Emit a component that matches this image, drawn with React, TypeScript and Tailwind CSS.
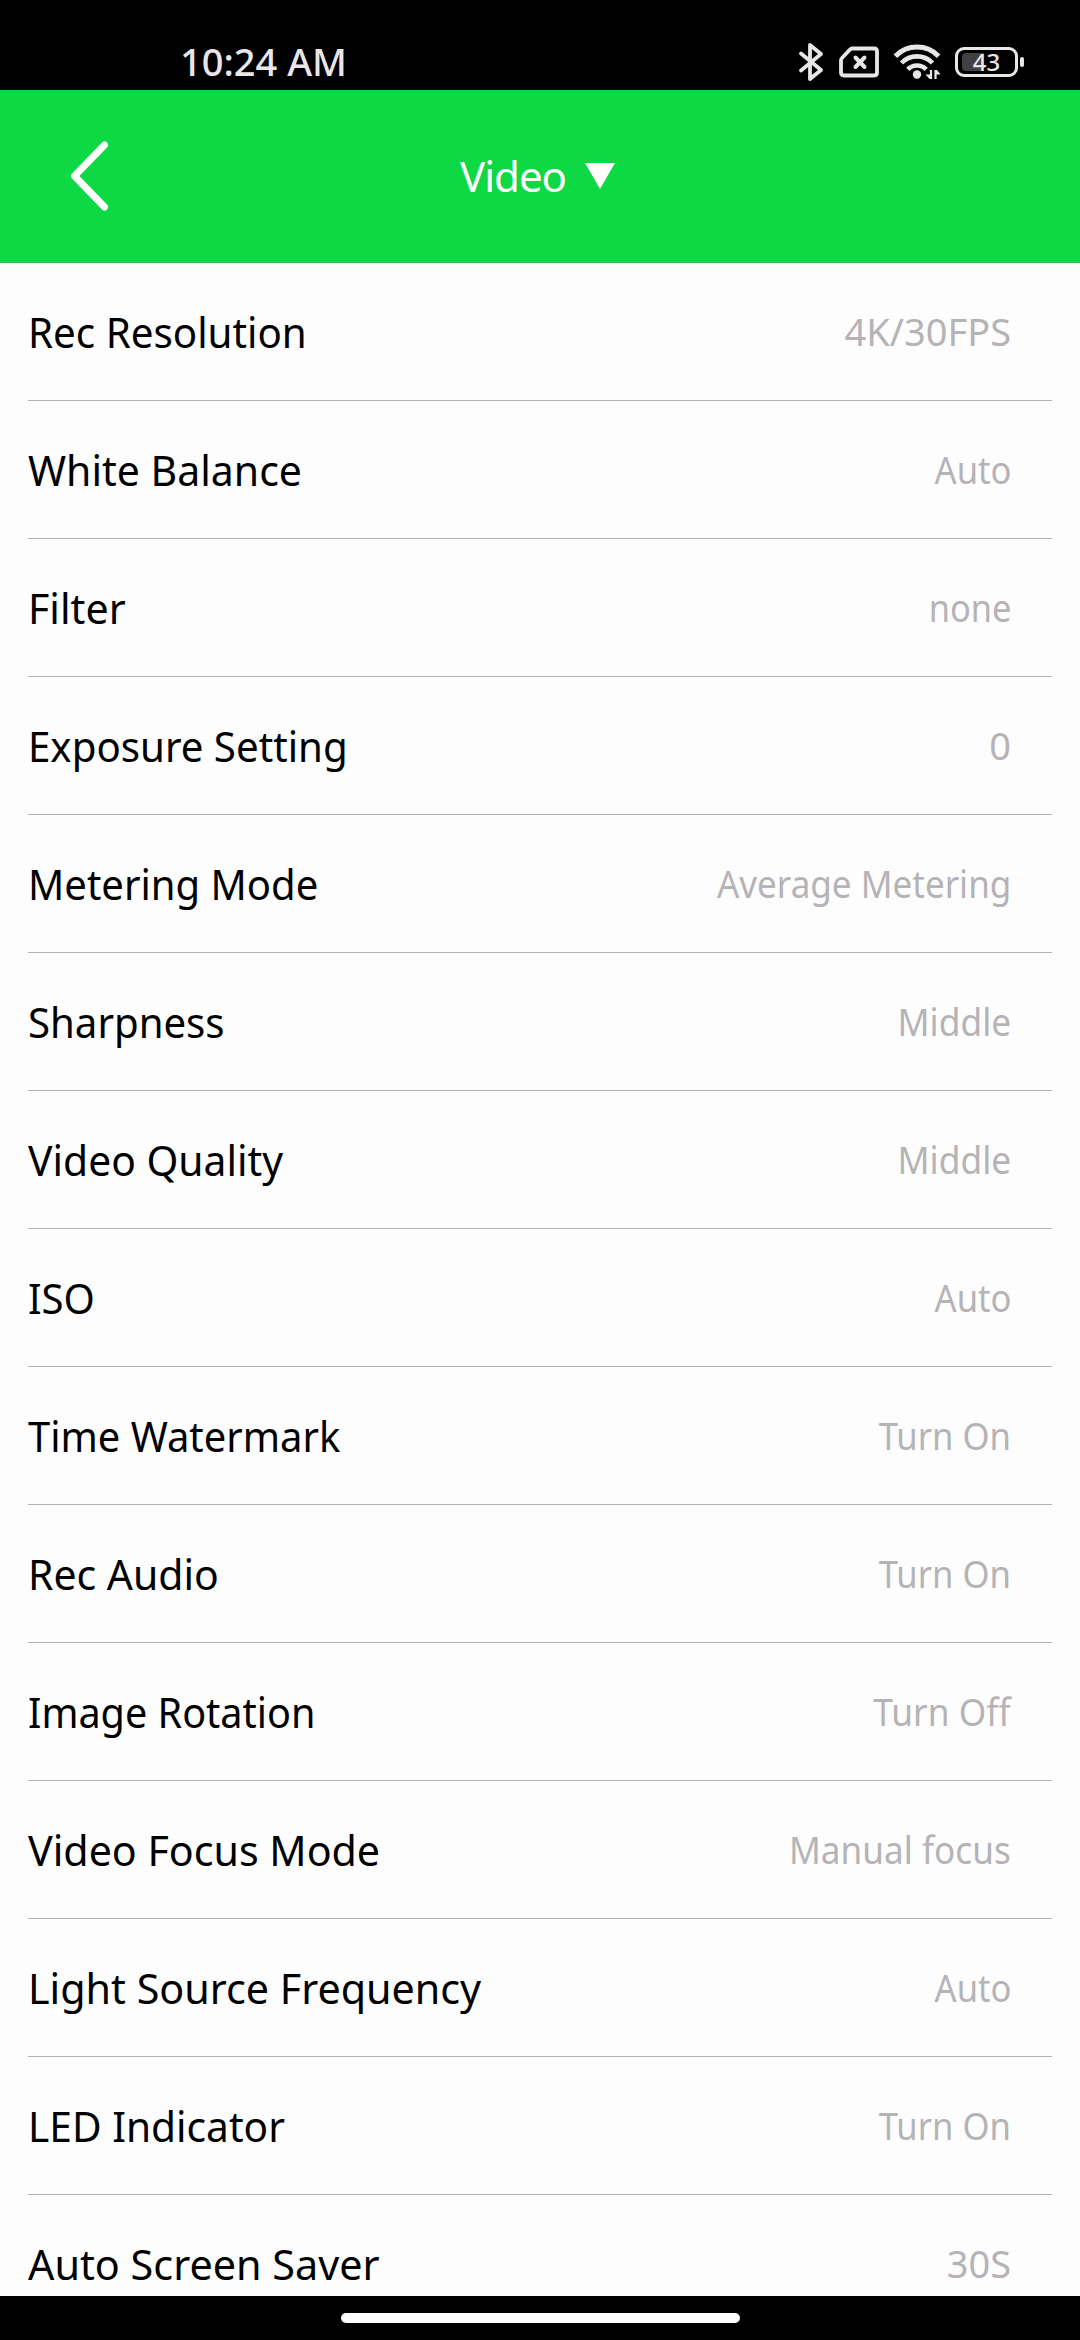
interface Setting {
  label: string;
  value: string;
  labelFit: string;
  valueFit?: string;
}

const SETTINGS: Setting[] = [
  { label: 'Rec Resolution', value: '4K/30FPS', labelFit: 'scale-x-[0.96]' },
  { label: 'White Balance', value: 'Auto', labelFit: 'scale-x-[0.976]', valueFit: 'scale-x-[0.91]' },
  { label: 'Filter', value: 'none', labelFit: 'scale-x-[0.98]', valueFit: 'scale-x-[0.905]' },
  { label: 'Exposure Setting', value: '0', labelFit: 'scale-x-[0.958]' },
  { label: 'Metering Mode', value: 'Average Metering', labelFit: 'scale-x-[0.953]', valueFit: 'scale-x-[0.922]' },
  { label: 'Sharpness', value: 'Middle', labelFit: 'scale-x-[0.956]', valueFit: 'scale-x-[0.93]' },
  { label: 'Video Quality', value: 'Middle', labelFit: 'scale-x-[0.972]', valueFit: 'scale-x-[0.93]' },
  { label: 'ISO', value: 'Auto', labelFit: 'scale-x-[0.955]', valueFit: 'scale-x-[0.91]' },
  { label: 'Time Watermark', value: 'Turn On', labelFit: 'scale-x-[0.95]', valueFit: 'scale-x-[0.912]' },
  { label: 'Rec Audio', value: 'Turn On', labelFit: 'scale-x-[0.975]', valueFit: 'scale-x-[0.912]' },
  { label: 'Image Rotation', value: 'Turn Off', labelFit: 'scale-x-[0.942]', valueFit: 'scale-x-[0.93]' },
  { label: 'Video Focus Mode', value: 'Manual focus', labelFit: 'scale-x-[0.98]', valueFit: 'scale-x-[0.925]' },
  { label: 'Light Source Frequency', value: 'Auto', labelFit: 'scale-x-[0.982]', valueFit: 'scale-x-[0.91]' },
  { label: 'LED Indicator', value: 'Turn On', labelFit: 'scale-x-[0.968]', valueFit: 'scale-x-[0.912]' },
  { label: 'Auto Screen Saver', value: '30S', labelFit: 'scale-x-[0.984]' },
];

function BluetoothIcon() {
  return (
    <svg width="26" height="40" viewBox="0 0 26 40" fill="none" stroke="currentColor" strokeWidth="3.8" strokeLinecap="round" strokeLinejoin="round">
      <path d="M3 11.5 L23 28 L12 37 V3 L23 12 L3 28.5" />
    </svg>
  );
}

function NoSimIcon() {
  return (
    <svg width="42" height="32" viewBox="0 0 42 32" fill="none" stroke="currentColor" strokeLinecap="round" strokeLinejoin="round">
      <path d="M14 2.5 H36 Q39 2.5 39 5.5 V26.5 Q39 29.5 36 29.5 H6 Q3 29.5 3 26.5 V14.5 Q3 13 4 12 L12 3.5 Q13 2.5 14 2.5 Z" strokeWidth="3.8" />
      <path d="M17.5 11.5 L26.5 21 M26.5 11.5 L17.5 21" strokeWidth="4" />
    </svg>
  );
}

function WifiIcon() {
  return (
    <svg width="48" height="36" viewBox="0 0 48 36" fill="none" stroke="currentColor">
      <path d="M2.4 12.2 A30 30 0 0 1 45.6 12.2" strokeWidth="5" />
      <path d="M8.5 19 A21.5 21.5 0 0 1 39.5 19" strokeWidth="4.6" />
      <path d="M14.8 25.4 A12.8 12.8 0 0 1 33.2 25.4" strokeWidth="4.6" />
      <circle cx="24" cy="30.5" r="4.2" fill="currentColor" stroke="none" />
      {/* up / down traffic arrows */}
      <path d="M38 26 V35 M42.5 26 V35" strokeWidth="2.2" />
      <path d="M38 35 H36.5 L32.5 30.5 H38 Z M42.5 26 H44 L47.5 30.5 H42.5 Z" fill="currentColor" stroke="none" />
    </svg>
  );
}

function Battery({ level }: { level: number }) {
  return (
    <div className="flex items-center gap-[2px]">
      <div className="relative flex h-[30px] w-[63px] items-center justify-center rounded-[9px] border-[3px] border-current p-1">
        <div className="absolute top-[3px] left-[4px] h-[18px] w-[22px] rounded-l-[4px] bg-[#414043]" />
        <span className="relative text-[24px] leading-none font-medium">{level}</span>
      </div>
      <div className="h-[10px] w-[4px] rounded-[2px] bg-current" />
    </div>
  );
}

function StatusBar() {
  return (
    <div className="flex h-[90px] shrink-0 items-end justify-between bg-black pr-[56px] pl-[180px] text-[#e8e6e9]">
      <span className="mb-[9px] text-[38px] leading-[40px] font-medium">10:24 AM</span>
      <div className="mb-[8px] flex h-[40px] items-center">
        <BluetoothIcon />
        <div className="ml-[14px]"><NoSimIcon /></div>
        <div className="ml-[13px]"><WifiIcon /></div>
        <div className="ml-[14px]"><Battery level={43} /></div>
      </div>
    </div>
  );
}

function Header({ title }: { title: string }) {
  return (
    <header className="grid h-[173px] shrink-0 grid-cols-[1fr_auto_1fr] items-center border-b border-[#3fb661] bg-[#0dd945] text-white">
      <button className="ml-[70px] w-fit" aria-label="Back">
        <svg width="40" height="72" viewBox="0 0 40 72" fill="none" stroke="currentColor" strokeWidth="7" strokeLinecap="round" strokeLinejoin="round">
          <path d="M34.5 5 L4.5 36 L34.5 67" />
        </svg>
      </button>
      <button className="mr-[5px] flex items-center gap-[19px]">
        <span className="text-[42px] leading-none tracking-[-1px]">{title}</span>
        <svg width="30" height="26" viewBox="0 0 30 26" fill="currentColor">
          <path d="M0 0 H30 L15 26 Z" />
        </svg>
      </button>
    </header>
  );
}

function SettingRow({ label, value, labelFit, valueFit = '' }: Setting) {
  return (
    <li className="mx-[28px] flex h-[138px] shrink-0 items-center justify-between border-b border-[#b5b4b6] pr-[41px]">
      <span className={`origin-left text-[42px] text-black ${labelFit}`}>{label}</span>
      <span className={`origin-right text-[38px] text-[#b5b3b6] ${valueFit}`}>{value}</span>
    </li>
  );
}

export default function App() {
  return (
    <div className="flex h-[2340px] w-[1080px] flex-col overflow-hidden bg-[#fdfdfd] font-['Noto_Sans',sans-serif]">
      <StatusBar />
      <Header title="Video" />
      <ul className="flex min-h-0 flex-1 flex-col overflow-hidden">
        {SETTINGS.map((s) => (
          <SettingRow key={s.label} {...s} />
        ))}
      </ul>
      <div className="flex h-[44px] shrink-0 justify-center bg-black pt-[17px]">
        <div className="h-[10px] w-[399px] rounded-full bg-white" />
      </div>
    </div>
  );
}
